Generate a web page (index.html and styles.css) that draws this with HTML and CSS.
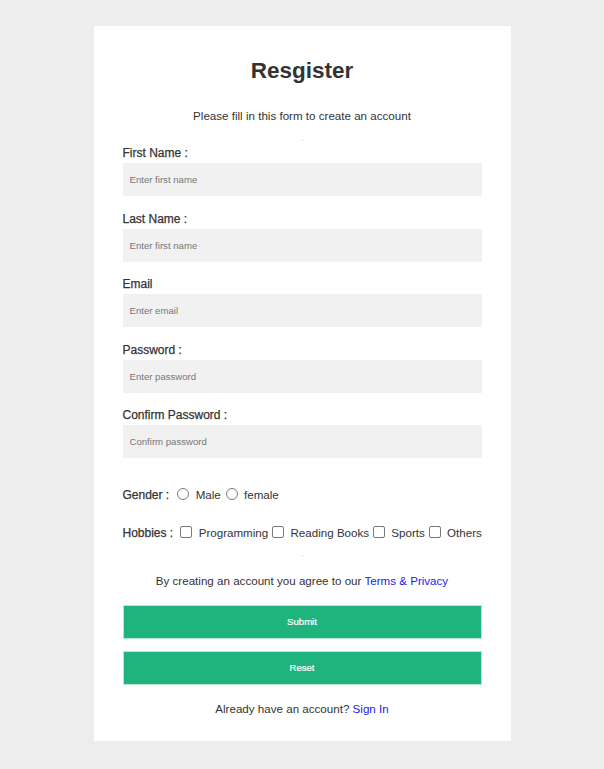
FILE: index.html
```html
<!DOCTYPE html>
<html lang="en">
<head>
<meta charset="utf-8">
<title>Resgister</title>
<link rel="stylesheet" href="styles.css">
</head>
<body>
<form class="card">
  <h1 class="title">Resgister</h1>
  <p class="subtitle">Please fill in this form to create an account</p>
  <div class="dot"></div>
  <div class="fields">
    <div class="field">
      <label class="label" for="fn">First Name :</label>
      <input class="text" id="fn" type="text" placeholder="Enter first name">
    </div>
    <div class="field">
      <label class="label" for="ln">Last Name :</label>
      <input class="text" id="ln" type="text" placeholder="Enter first name">
    </div>
    <div class="field">
      <label class="label" for="em">Email</label>
      <input class="text" id="em" type="email" placeholder="Enter email">
    </div>
    <div class="field">
      <label class="label" for="pw">Password :</label>
      <input class="text" id="pw" type="password" placeholder="Enter password">
    </div>
    <div class="field">
      <label class="label" for="cpw">Confirm Password :</label>
      <input class="text" id="cpw" type="password" placeholder="Confirm password">
    </div>
  </div>
  <div class="row gender"><span class="label-inline">Gender :</span> <label class="opt"><input class="radio" type="radio" name="g"> Male</label><label class="opt"><input class="radio" type="radio" name="g"> female</label></div>
  <div class="row hobbies"><span class="label-inline">Hobbies :</span> <label class="opt"><input class="check" type="checkbox"> Programming</label><label class="opt"><input class="check" type="checkbox"> Reading Books</label><label class="opt"><input class="check" type="checkbox"> Sports</label><label class="opt"><input class="check" type="checkbox"> Others</label></div>
  <div class="dot dot-2"></div>
  <p class="terms">By creating an account you agree to our <a href="#" class="link">Terms &amp; Privacy</a></p>
  <button type="submit" class="btn btn-submit">Submit</button>
  <button type="reset" class="btn btn-reset">Reset</button>
  <p class="signin">Already have an account? <a href="#" class="link">Sign In</a></p>
</form>
</body>
</html>
```
FILE: styles.css
```css
html, body {
  margin: 0;
  padding: 0;
}
body {
  background: #ededed;
  font-family: "Liberation Sans", Arial, sans-serif;
  color: #333;
  font-size: 11.6px;
  line-height: 14px;
}
.card {
  box-sizing: border-box;
  width: 417px;
  margin: 26px auto 0;
  background: #fff;
  padding: 31px 29px 25px;
  display: flex;
  flex-direction: column;
}
.title {
  margin: 0;
  text-align: center;
  font-size: 22.5px;
  line-height: 27px;
  font-weight: 700;
  color: #333;
}
.subtitle {
  margin: 25px 0 0;
  text-align: center;
  line-height: 14px;
}
.dot {
  width: 1px;
  height: 1px;
  background: #c8c8c8;
  margin: 16.5px auto 0;
}
.fields {
  margin-top: 5.5px;
  display: flex;
  flex-direction: column;
  gap: 15.5px;
}
.field {
  display: flex;
  flex-direction: column;
}
.label {
  display: block;
  font-size: 12px;
  line-height: 14px;
  margin-bottom: 3px;
  -webkit-text-stroke: 0.25px #333;
}
.text {
  box-sizing: border-box;
  height: 33px;
  width: 100%;
  margin: 0;
  border: none;
  outline: none;
  background: #f1f1f1;
  padding: 0 7px;
  font-family: "Liberation Sans", Arial, sans-serif;
  font-size: 9.6px;
  color: #333;
}
.text::placeholder {
  color: #777;
}
.row {
  line-height: 16px;
  white-space: nowrap;
}
.gender {
  margin-top: 28.8px;
}
.hobbies {
  margin-top: 22.5px;
}
.label-inline {
  font-size: 12px;
  -webkit-text-stroke: 0.25px #333;
}
.radio,
.check {
  -webkit-appearance: none;
  appearance: none;
  box-sizing: border-box;
  width: 12px;
  height: 12px;
  border: 1px solid #7a7a7a;
  background: #fff;
  vertical-align: -1px;
}
.radio {
  border-radius: 50%;
  margin: 0 3px 0 5px;
}
.check {
  border-radius: 2px;
  margin: 0 3px 0 4px;
}
.dot-2 {
  margin-top: 13.7px;
}
.terms {
  margin: 17.8px 0 0;
  text-align: center;
  line-height: 14px;
}
.link {
  color: #1a1aee;
  text-decoration: none;
}
.btn {
  box-sizing: border-box;
  height: 34px;
  width: 100%;
  border: 1px solid #b4e8d3;
  background: #1fb37d;
  color: #fff;
  font-family: "Liberation Sans", Arial, sans-serif;
  font-size: 9.6px;
  -webkit-text-stroke: 0.2px #fff;
  padding: 0;
  margin: 0;
  cursor: pointer;
}
.btn-submit {
  margin-top: 17.2px;
}
.btn-reset {
  margin-top: 12px;
}
.signin {
  margin: 17px 0 0;
  text-align: center;
  line-height: 14px;
}
```
